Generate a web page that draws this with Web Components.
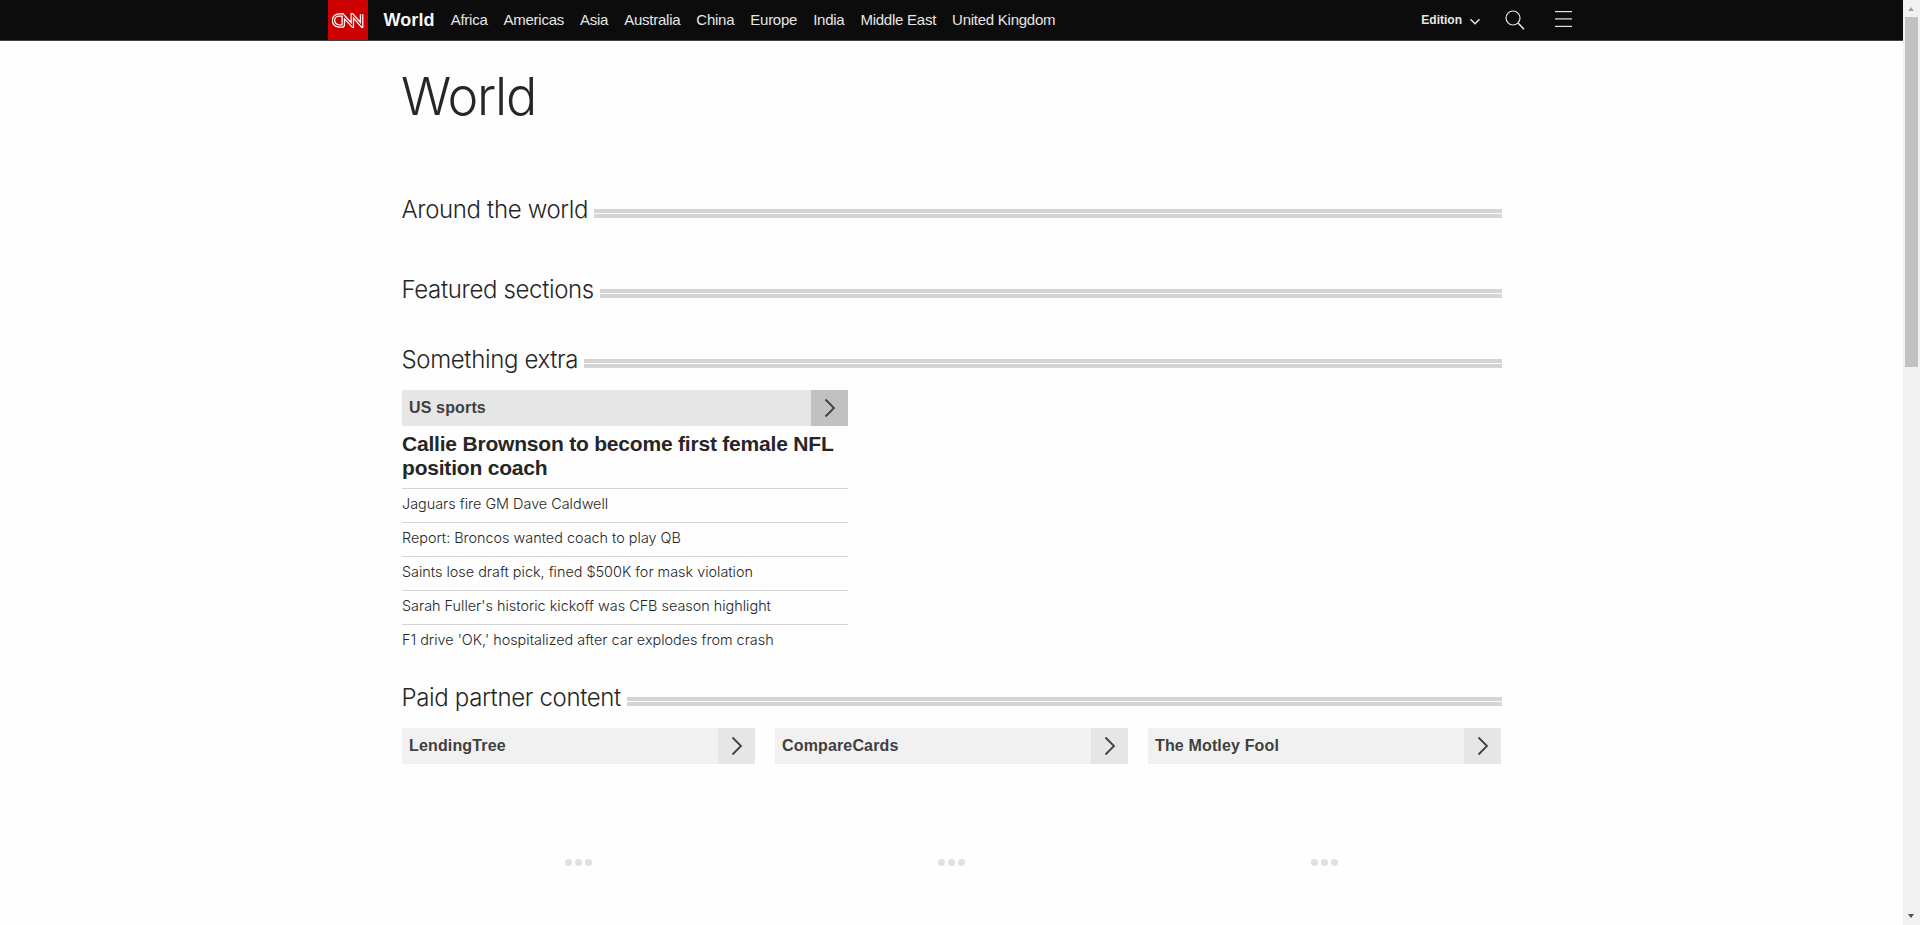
<!DOCTYPE html>
<html><head><meta charset="utf-8"><title>World</title>
<style>
html,body{margin:0;padding:0;height:925px;overflow:hidden;background:#fefefe}
body{display:flex;font-family:"Liberation Sans",Arial,sans-serif;color:#262626}
</style></head><body>
<cnn-page></cnn-page>
<fake-scrollbar></fake-scrollbar>
<script>
const el=(name,css,html)=>customElements.define(name,class extends HTMLElement{
  constructor(){super();this.attachShadow({mode:'open'}).innerHTML=`<style>${css}</style>${html}`}
});
const LIGHT='"Inter",sans-serif';
el('cnn-logo',`:host{display:flex;width:40px;height:40px;background:#c00;align-items:center;justify-content:center}svg{display:block}`,
`<svg width="32" height="15" viewBox="0 0 32 15" fill="none" stroke-linejoin="miter"><path d="M11.5 2H7a5.5 5.5 0 0 0 0 11h3a1.3 1.3 0 0 0 1.3-1.3V2.8L20.3 12.5V2L29.6 12.5V1.2" stroke="#fff" stroke-width="3.6"/><path d="M11.5 2H7a5.5 5.5 0 0 0 0 11h3a1.3 1.3 0 0 0 1.3-1.3V2.8L20.3 12.5V2L29.6 12.5V1.2" stroke="#c00" stroke-width="1.1"/></svg>`);
el('nav-link',`:host{display:block;font:15px/40px "Liberation Sans",Arial,sans-serif;letter-spacing:-.25px;color:#e6e6e6;white-space:nowrap}`,`<slot></slot>`);
el('cnn-header',`:host{display:flex;height:40px;background:#0c0c0c;border-bottom:1px solid #444;padding-left:328px;align-items:center}
.brand{font:bold 18px/40px "Liberation Sans",Arial,sans-serif;letter-spacing:.1px;color:#f5f5f5;margin:0 16px 0 15.5px}
nav{display:flex;gap:16px}
.right{display:flex;align-items:center;margin-left:auto;padding-right:331px}
.ed{font:bold 12px/40px "Liberation Sans",Arial,sans-serif;color:#e6e6e6;margin-right:8px}
svg{display:block}`,
`<cnn-logo></cnn-logo><div class="brand">World</div><nav><nav-link>Africa</nav-link><nav-link>Americas</nav-link><nav-link>Asia</nav-link><nav-link>Australia</nav-link><nav-link>China</nav-link><nav-link>Europe</nav-link><nav-link>India</nav-link><nav-link>Middle East</nav-link><nav-link>United Kingdom</nav-link></nav>
<div class="right"><span class="ed">Edition</span>
<svg width="10" height="7" viewBox="0 0 10 7" style="margin-right:25px;margin-top:3px" fill="none" stroke="#e6e6e6" stroke-width="1.5"><path d="M.5 1.2 5 5.7 9.5 1.2"/></svg>
<svg width="20" height="20" viewBox="0 0 20 20" style="margin-right:30px;margin-top:-1px" fill="none" stroke="#e6e6e6" stroke-width="1.2"><circle cx="8" cy="8" r="7"/><path stroke-width="1.6" d="M13 13 19 19.2"/></svg>
<svg width="17" height="16" viewBox="0 0 17 16" style="margin-top:-2px" fill="#e6e6e6"><rect y="0" width="17" height="1.2"/><rect y="7.3" width="17" height="1.2"/><rect y="14.8" width="17" height="1.2"/></svg>
</div>`);
el('section-head',`:host{display:flex;height:30px;font:300 24px/32px ${LIGHT};color:#262626;letter-spacing:-.35px;gap:6px;margin-left:-.5px}
.t{white-space:nowrap}
.r{flex:1;height:0;margin-top:15px;border-top:4px solid #d4d4d4;box-shadow:0 5px 0 #d4d4d4}`,
`<div class="t"><slot></slot></div><div class="r"></div>`);
el('chevron-bar',`:host{display:flex;height:36px;background:var(--bar,#f1f1f1);align-items:center;justify-content:space-between;font:bold 16px/35px "Liberation Sans",Arial,sans-serif;letter-spacing:.15px;color:#404040}
.t{padding-left:7px;height:36px}
.a{width:37px;height:36px;background:var(--arrow,#e6e6e6);display:flex;align-items:center;justify-content:center}`,
`<div class="t"><slot></slot></div><div class="a"><svg width="12" height="20" viewBox="0 0 12 20" fill="none" stroke="#404040" stroke-width="1.8"><path d="M1.5 1.5 10 10 1.5 18.5"/></svg></div>`);
el('list-row',`:host{display:block;height:33px;border-top:1px solid #d4d4d4;font:300 14.4px/30px ${LIGHT};color:#262626;white-space:nowrap}`,`<slot></slot>`);
el('load-dots',`:host{display:flex;justify-content:center;gap:3px;margin-top:95px}i{width:7px;height:7px;border-radius:50%;background:#e0e0e0}`,`<i></i><i></i><i></i>`);
el('partner-col',`:host{display:block;width:353px}`,`<chevron-bar><slot></slot></chevron-bar><load-dots></load-dots>`);
el('cnn-page',`:host{display:block;width:1903px;height:925px;overflow:hidden;background:#fefefe}
main{width:1100px;margin-left:402px}
h1{margin:21px 0 0 -1px;font:300 52px/70px ${LIGHT};letter-spacing:-1.2px;color:#262626;height:70px}
.around{margin-top:62px}.feat{margin-top:50px}.extra{margin-top:40px}.paid{margin-top:24px}
.story{width:446px;margin-top:16px}
chevron-bar.us{--bar:#e6e6e6;--arrow:#c1c1c1}
h2{margin:6px 0 0;font:bold 21px/24px "Liberation Sans",Arial,sans-serif;letter-spacing:-.2px;color:#262626;padding-bottom:8px}
.cols{display:flex;gap:20px;margin-top:16px}`,
`<cnn-header></cnn-header><main><h1>World</h1>
<section-head class="around">Around the world</section-head>
<section-head class="feat">Featured sections</section-head>
<section-head class="extra">Something extra</section-head>
<div class="story"><chevron-bar class="us">US sports</chevron-bar>
<h2>Callie Brownson to become first female NFL position coach</h2>
<list-row>Jaguars fire GM Dave Caldwell</list-row><list-row>Report: Broncos wanted coach to play QB</list-row><list-row>Saints lose draft pick, fined $500K for mask violation</list-row><list-row>Sarah Fuller's historic kickoff was CFB season highlight</list-row><list-row>F1 drive 'OK,' hospitalized after car explodes from crash</list-row></div>
<section-head class="paid">Paid partner content</section-head>
<div class="cols"><partner-col>LendingTree</partner-col><partner-col>CompareCards</partner-col><partner-col>The Motley Fool</partner-col></div>
</main>`);
el('fake-scrollbar',`:host{display:block;position:fixed;right:0;top:0;width:17px;height:925px;background:#f1f1f1}
.u,.d{position:absolute;left:5px;width:0;height:0;border-left:3.5px solid transparent;border-right:3.5px solid transparent}
.u{top:7px;border-bottom:4px solid #a3a3a3}.d{bottom:7px;border-top:4px solid #505050}
.t{position:absolute;left:2px;top:17px;width:13px;height:350px;background:#c1c1c1}`,
`<div class="u"></div><div class="t"></div><div class="d"></div>`);
</script></body></html>
